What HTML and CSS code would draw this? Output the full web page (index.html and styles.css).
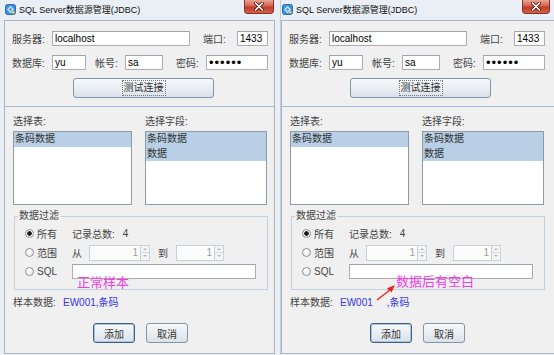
FILE: index.html
```html
<!DOCTYPE html>
<html lang="zh-CN">
<head>
    <meta charset="UTF-8">
    <meta name="viewport" content="width=device-width, initial-scale=1.0">
    <title>SQL Server数据源管理(JDBC)</title>
    <link rel="stylesheet" href="styles.css">
</head>
<body>

<div class="desktop">

    <!-- left dialog: normal sample -->
    <div class="window window-left">
        <div class="titlebar">
            <svg class="app-icon" width="11" height="11" viewBox="0 0 11 11">
                <rect x="0.5" y="0.5" width="10" height="10" rx="2" fill="#3f8fd8" stroke="#2a6fb5"/>
                <path d="M5.5 1.8 L9 5.5 L5.5 9.2 L2 5.5 Z" fill="#cfe6fb"/>
                <path d="M5.5 3.6 L7.4 5.5 L5.5 7.4 L3.6 5.5 Z" fill="#5aa3e6"/>
                <circle cx="8.3" cy="8.3" r="1.4" fill="#f2c94c"/>
            </svg>
            <span class="title">SQL Server数据源管理(JDBC)</span>
            <div class="close-btn">
                <svg width="10" height="9" viewBox="0 0 10 9">
                    <path d="M1.5 1 L8.5 8 M8.5 1 L1.5 8" stroke="#5a1a12" stroke-width="3.2" stroke-linecap="round"/>
                    <path d="M1.5 1 L8.5 8 M8.5 1 L1.5 8" stroke="#fff" stroke-width="1.6" stroke-linecap="round"/>
                </svg>
            </div>
        </div>
        <div class="content">
            <div class="conn">
                <div class="row">
                    <label class="lbl lbl-srv">服务器:</label>
                    <input class="field f-host" type="text" value="localhost">
                    <label class="lbl lbl-port">端口:</label>
                    <input class="field f-port" type="text" value="1433">
                </div>
                <div class="row row-2">
                    <label class="lbl lbl-srv">数据库:</label>
                    <input class="field f-db" type="text" value="yu">
                    <label class="lbl lbl-user">帐号:</label>
                    <input class="field f-user" type="text" value="sa">
                    <label class="lbl lbl-pwd">密码:</label>
                    <input class="field f-pwd" type="password" value="123456">
                </div>
                <div class="btn-row">
                    <button class="btn btn-test"><span class="focus">测试连接</span></button>
                </div>
            </div>
            <div class="main">
                <div class="lists">
                    <div class="list-col col-table">
                        <div class="list-title">选择表:</div>
                        <div class="listbox">
                            <div class="item sel">条码数据</div>
                        </div>
                    </div>
                    <div class="list-col col-field">
                        <div class="list-title">选择字段:</div>
                        <div class="listbox">
                            <div class="item sel">条码数据</div>
                            <div class="item sel">数据</div>
                        </div>
                    </div>
                </div>
                <fieldset class="filter">
                    <legend>数据过滤</legend>
                    <div class="frow">
                        <span class="radio checked"><i></i>所有</span>
                        <span class="count">记录总数:</span><span class="count-num">4</span>
                    </div>
                    <div class="frow">
                        <span class="radio"><i></i>范围</span>
                        <span class="from">从</span>
                        <span class="spinner sp-1"><input type="text" value="1" disabled><span class="arrows"><b class="up"></b><b class="down"></b></span></span>
                        <span class="to">到</span>
                        <span class="spinner sp-2"><input type="text" value="1" disabled><span class="arrows"><b class="up"></b><b class="down"></b></span></span>
                    </div>
                    <div class="frow">
                        <span class="radio"><i></i>SQL</span>
                        <input class="field f-sql" type="text">
                    </div>
                </fieldset>
                <div class="sample">
                    <span class="sample-lbl">样本数据:</span>
                    <span class="sample-val">EW001,条码</span>
                </div>
                <div class="actions">
                    <button class="btn btn-add">添加</button>
                    <button class="btn btn-cancel">取消</button>
                </div>
            </div>
            <div class="note note-left">正常样本</div>
        </div>
    </div>

    <!-- right dialog: sample with trailing spaces -->
    <div class="window window-right">
        <div class="titlebar">
            <svg class="app-icon" width="11" height="11" viewBox="0 0 11 11">
                <rect x="0.5" y="0.5" width="10" height="10" rx="2" fill="#3f8fd8" stroke="#2a6fb5"/>
                <path d="M5.5 1.8 L9 5.5 L5.5 9.2 L2 5.5 Z" fill="#cfe6fb"/>
                <path d="M5.5 3.6 L7.4 5.5 L5.5 7.4 L3.6 5.5 Z" fill="#5aa3e6"/>
                <circle cx="8.3" cy="8.3" r="1.4" fill="#f2c94c"/>
            </svg>
            <span class="title">SQL Server数据源管理(JDBC)</span>
            <div class="close-btn">
                <svg width="10" height="9" viewBox="0 0 10 9">
                    <path d="M1.5 1 L8.5 8 M8.5 1 L1.5 8" stroke="#5a1a12" stroke-width="3.2" stroke-linecap="round"/>
                    <path d="M1.5 1 L8.5 8 M8.5 1 L1.5 8" stroke="#fff" stroke-width="1.6" stroke-linecap="round"/>
                </svg>
            </div>
        </div>
        <div class="content">
            <div class="conn">
                <div class="row">
                    <label class="lbl lbl-srv">服务器:</label>
                    <input class="field f-host" type="text" value="localhost">
                    <label class="lbl lbl-port">端口:</label>
                    <input class="field f-port" type="text" value="1433">
                </div>
                <div class="row row-2">
                    <label class="lbl lbl-srv">数据库:</label>
                    <input class="field f-db" type="text" value="yu">
                    <label class="lbl lbl-user">帐号:</label>
                    <input class="field f-user" type="text" value="sa">
                    <label class="lbl lbl-pwd">密码:</label>
                    <input class="field f-pwd" type="password" value="123456">
                </div>
                <div class="btn-row">
                    <button class="btn btn-test"><span class="focus">测试连接</span></button>
                </div>
            </div>
            <div class="main">
                <div class="lists">
                    <div class="list-col col-table">
                        <div class="list-title">选择表:</div>
                        <div class="listbox">
                            <div class="item sel">条码数据</div>
                        </div>
                    </div>
                    <div class="list-col col-field">
                        <div class="list-title">选择字段:</div>
                        <div class="listbox">
                            <div class="item sel">条码数据</div>
                            <div class="item sel">数据</div>
                        </div>
                    </div>
                </div>
                <fieldset class="filter">
                    <legend>数据过滤</legend>
                    <div class="frow">
                        <span class="radio checked"><i></i>所有</span>
                        <span class="count">记录总数:</span><span class="count-num">4</span>
                    </div>
                    <div class="frow">
                        <span class="radio"><i></i>范围</span>
                        <span class="from">从</span>
                        <span class="spinner sp-1"><input type="text" value="1" disabled><span class="arrows"><b class="up"></b><b class="down"></b></span></span>
                        <span class="to">到</span>
                        <span class="spinner sp-2"><input type="text" value="1" disabled><span class="arrows"><b class="up"></b><b class="down"></b></span></span>
                    </div>
                    <div class="frow">
                        <span class="radio"><i></i>SQL</span>
                        <input class="field f-sql" type="text">
                    </div>
                </fieldset>
                <div class="sample">
                    <span class="sample-lbl">样本数据:</span>
                    <span class="sample-val">EW001     ,条码</span>
                </div>
                <div class="actions">
                    <button class="btn btn-add">添加</button>
                    <button class="btn btn-cancel">取消</button>
                </div>
            </div>
            <svg class="arrow" width="24" height="22" viewBox="0 0 24 22">
                <path d="M2.5 18.5 L14.6 9.2 L13 7.2 L21 4 L17.6 11.6 L16 9.8 L3.5 19.6 Z" fill="#e8281e"/>
            </svg>
            <div class="note note-right">数据后有空白</div>
        </div>
    </div>

</div>

</body>
</html>
```

FILE: styles.css
```css
body {
    margin: 0;
    background: #e8edf3;
    font-family: 'Liberation Sans', 'Noto Sans CJK SC', sans-serif;
    font-size: 10px;
    color: #444;
}
.desktop {
    display: flex;
    width: 554px;
    height: 355px;
    overflow: hidden;
}
.window {
    display: flex;
    flex-direction: column;
    height: 355px;
    box-sizing: border-box;
    background: #eaeff5;
}
.window-left {
    width: 281px;
    padding: 0 5px 1px 4px;
    border-right: 1px solid #c3ccd7;
}
.window-right {
    width: 273px;
    padding: 0 0 1px 0;
}

/* title bar */
.titlebar {
    display: flex;
    align-items: flex-start;
    height: 20px;
    flex-shrink: 0;
}
.app-icon {
    margin: 4px 0 0 1px;
}
.title {
    margin: 4px 0 0 3px;
    font-size: 9px;
    line-height: 12px;
    color: #111;
}
.close-btn {
    margin-left: auto;
    margin-right: 1px;
    width: 30px;
    height: 14px;
    box-sizing: border-box;
    border: 1px solid #8a3126;
    border-top: none;
    border-radius: 0 0 4px 4px;
    background: linear-gradient(#e9a597, #d4624f 45%, #c23b27 55%, #d6604b);
    display: flex;
    align-items: center;
    justify-content: center;
}
.window-right .close-btn {
    margin-right: 4px;
    width: 28px;
}

/* client area */
.content {
    flex: 1;
    position: relative;
    background: #f0f0f0;
    border: 1px solid #aab5c2;
}
.window-right .content {
    border-right: none;
}
.conn {
    padding: 10px 0 8px 7px;
    border-bottom: 1px solid #a6bdd8;
}
.row {
    display: flex;
    align-items: center;
    height: 15px;
}
.row-2 {
    margin-top: 9px;
}
.lbl {
    flex-shrink: 0;
}
.lbl-srv { width: 40px; }
.lbl-port { width: 34px; margin-left: 13px; }
.lbl-user { width: 30px; margin-left: 9px; }
.lbl-pwd { width: 30px; margin-left: 13px; }

.field {
    height: 15px;
    box-sizing: border-box;
    margin: 0;
    padding: 0 2px;
    border: 1px solid #abadb3;
    border-top-color: #9ea3ab;
    background: #fff;
    font-family: inherit;
    font-size: 10px;
    color: #000;
    outline: none;
}
.f-host { width: 138px; }
.f-port { width: 31px; }
.f-db { width: 34px; }
.f-user { width: 38px; }
.f-pwd {
    width: 62px;
    font-size: 13px;
    letter-spacing: 1px;
}

.btn {
    box-sizing: border-box;
    margin: 0;
    padding: 0;
    border: 1px solid #8593a6;
    border-radius: 3px;
    background: linear-gradient(#f7f9fb, #e9eef3 50%, #d9e1ea);
    font-family: inherit;
    font-size: 10px;
    color: #333;
}
.btn-row {
    margin-top: 8px;
    padding-left: 61px;
}
.btn-test {
    width: 141px;
    height: 20px;
}
.focus {
    display: inline-block;
    padding: 1px 1px;
    border: 1px dotted #777;
    line-height: 12px;
}

/* lower part */
.main {
    padding: 9px 0 0 8px;
}
.lists {
    display: flex;
    gap: 13px;
}
.list-title {
    line-height: 12px;
    margin-bottom: 3px;
}
.listbox {
    height: 74px;
    box-sizing: border-box;
    border: 1px solid #8f9aa8;
    background: #fff;
}
.col-table .listbox { width: 119px; }
.col-field .listbox { width: 122px; }
.item {
    height: 14.5px;
    line-height: 14.5px;
    padding-left: 1px;
    color: #333;
}
.item.sel {
    background: #b8cfe5;
}

.filter {
    width: 254px;
    box-sizing: border-box;
    margin: 5px 0 0 1px;
    padding: 3px 0 9px 10px;
    border: 1px solid #c3d0de;
}
.filter legend {
    padding: 0 1px;
    margin-left: -7px;
    line-height: 12px;
}
.frow {
    display: flex;
    align-items: center;
    height: 17px;
}
.frow + .frow {
    margin-top: 2px;
}
.radio {
    display: flex;
    align-items: center;
    width: 47px;
    flex-shrink: 0;
}
.radio i {
    width: 9px;
    height: 9px;
    box-sizing: border-box;
    margin-right: 3px;
    border: 1px solid #8b9098;
    border-radius: 50%;
    background: radial-gradient(circle at 40% 35%, #fff, #e4e6e9);
}
.radio.checked i {
    background: radial-gradient(circle, #1c1c1c 0 2px, #f4f5f6 2.5px);
}
.count-num {
    margin-left: 8px;
}
.from { width: 17px; }
.to { width: 18px; margin-left: 8px; }
.spinner {
    display: flex;
    height: 16px;
}
.spinner input {
    box-sizing: border-box;
    margin: 0;
    padding: 0 2px 0 0;
    height: 16px;
    border: 1px solid #cbd0d6;
    border-right: none;
    background: #fbfbfb;
    font-family: inherit;
    font-size: 10px;
    color: #a0a0a0;
    text-align: right;
}
.sp-1 input { width: 51px; }
.sp-2 input { width: 38px; }
.arrows {
    display: flex;
    flex-direction: column;
    width: 10px;
    box-sizing: border-box;
    border: 1px solid #cbd0d6;
}
.arrows b {
    flex: 1;
    position: relative;
    background: #f4f4f4;
}
.arrows b + b {
    border-top: 1px solid #d6dade;
}
.arrows b::after {
    content: "";
    position: absolute;
    left: 2px;
    top: 2px;
    border-left: 2px solid transparent;
    border-right: 2px solid transparent;
}
.arrows .up::after { border-bottom: 2px solid #b8b8b8; }
.arrows .down::after { border-top: 2px solid #b8b8b8; }

.f-sql {
    width: 184px;
    height: 15px;
}

.sample {
    display: flex;
    margin-top: 7px;
    line-height: 12px;
}
.sample-lbl {
    width: 50px;
}
.sample-val {
    color: #3434e4;
    white-space: pre;
}
.actions {
    display: flex;
    gap: 11px;
    margin-top: 14px;
    padding-left: 80px;
}
.btn-add,
.btn-cancel {
    width: 42px;
    height: 20px;
}
.btn-add {
    border-color: #3f5f85;
    box-shadow: inset 0 0 0 1px #a9c6e4;
}

/* annotations drawn on the screenshot */
.note {
    position: absolute;
    font-size: 13px;
    line-height: 14px;
    color: #f03ce6;
}
.note-left {
    left: 72px;
    top: 255px;
}
.note-right {
    left: 114px;
    top: 254px;
}
.arrow {
    position: absolute;
    left: 92px;
    top: 260px;
}
```
